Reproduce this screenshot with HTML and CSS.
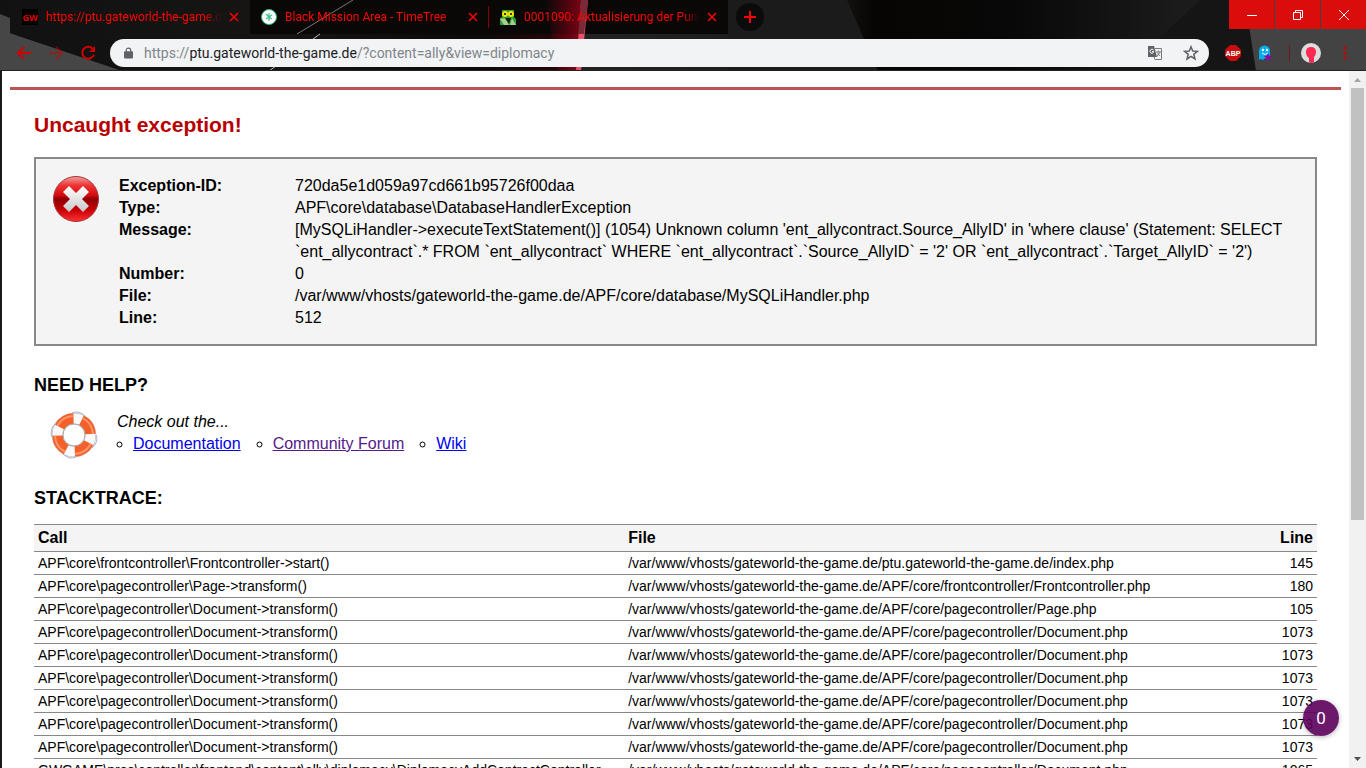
FILE: index.html
```
<!DOCTYPE html>
<html lang="en">
<head>
    <meta charset="UTF-8">
    <meta name="viewport" content="width=device-width, initial-scale=1.0">
    <title>Uncaught exception!</title>
    <link rel="stylesheet" href="styles.css">
</head>
<body>

<header class="browser">
    <svg class="theme" viewBox="0 0 1366 71" preserveAspectRatio="none" aria-hidden="true">
        <defs>
            <linearGradient id="base">
                <stop offset="0" stop-color="#111"/>
                <stop offset=".2" stop-color="#161514"/>
                <stop offset=".35" stop-color="#0b0a09"/>
                <stop offset=".415" stop-color="#2b0508"/>
                <stop offset=".425" stop-color="#222"/>
                <stop offset=".6" stop-color="#1c1c1c"/>
                <stop offset=".64" stop-color="#070503"/>
                <stop offset=".74" stop-color="#080808"/>
                <stop offset=".9" stop-color="#202020"/>
            </linearGradient>
            <linearGradient id="glow">
                <stop offset="0" stop-color="#a00018" stop-opacity="0"/>
                <stop offset="1" stop-color="#a00018" stop-opacity=".8"/>
            </linearGradient>
        </defs>
        <rect width="1366" height="71" fill="url(#base)"/>
        <path d="M0 14L10 18V33L122 71H0Z" fill="#464646"/>
        <path d="M10 0H82L98 62L10 33Z" fill="#131212"/>
        <path d="M847 0H728V71H878Z" fill="#1b1b1b"/>
        <path d="M1200 0L1126 71H1366V0Z" fill="#151515"/>
        <path d="M1245 0L1256 71H1366V0Z" fill="#434343"/>
        <path d="M250 0H728V34H250Z" fill="#090807"/>
        <path d="M545 0H584L577 71H558Z" fill="url(#glow)"/>
        <path d="M581 0H588L581 71H576Z" fill="#ef5069"/>
        <path d="M581 0H588L584 34H578Z" fill="#5d2029" opacity=".8"/>
        <path d="M353 0L297 34" stroke="#777"/>
        <path d="M320 34L269 71" stroke="#bbb"/>
        <path d="M0 70.500H1366" stroke="#222"/>
    </svg>

    <div class="tab-strip">
        <div class="tab">
            <svg class="favicon" viewBox="0 0 16 16"><rect width="16" height="16"/><text x="8" y="12" text-anchor="middle" class="gw">GW</text></svg>
            <span class="tab-title">https://ptu.gateworld-the-game.de/</span>
            <button class="tab-close" aria-label="Close tab"><svg viewBox="0 0 8 8"><path d="M0 0L8 8M8 0L0 8"/></svg></button>
        </div>
        <div class="tab">
            <svg class="favicon" viewBox="0 0 16 16"><circle cx="8" cy="8" r="7.500" fill="#fff" stroke="#24b47e"/><path d="M8 8L5 5M8 8V4M8 8L11 6M8 8L11 10M8 8V12M8 8L5 10" stroke="#3cbf8f" stroke-width="1.200"/></svg>
            <span class="tab-title">Black Mission Area - TimeTree</span>
            <button class="tab-close" aria-label="Close tab"><svg viewBox="0 0 8 8"><path d="M0 0L8 8M8 0L0 8"/></svg></button>
        </div>
        <div class="tab tab-divided">
            <svg class="favicon" viewBox="0 0 16 16"><path d="M2 1H14V8L16 10V16H0V9L2 8Z" fill="#2f9a32"/><path d="M0 10L5 9L9 16H4ZM12 9L16 16H10Z" fill="#a3d08a"/><path d="M5 9H11L9 15L7 12Z" fill="#10200c"/><circle cx="5" cy="5" r="3" fill="#f4e500"/><circle cx="11" cy="5" r="3" fill="#f4e500"/><circle cx="5" cy="5" r="1"/><circle cx="11" cy="5" r="1"/></svg>
            <span class="tab-title">0001090: Aktualisierung der Punkte</span>
            <button class="tab-close" aria-label="Close tab"><svg viewBox="0 0 8 8"><path d="M0 0L8 8M8 0L0 8"/></svg></button>
        </div>
        <button class="new-tab" aria-label="New tab"><svg viewBox="0 0 12 12"><path d="M6 0V12M0 6H12"/></svg></button>
        <div class="window-buttons">
            <button aria-label="Minimize"><svg viewBox="0 0 12 12"><path d="M1 6.500H11"/></svg></button>
            <button aria-label="Restore"><svg viewBox="0 0 12 12"><path d="M1.500 3.500H8.500V10.500H1.500ZM3.500 3.500V1.500H10.500V8.500H8.500"/></svg></button>
            <button aria-label="Close"><svg viewBox="0 0 12 12"><path d="M1 1L11 11M11 1L1 11"/></svg></button>
        </div>
    </div>

    <div class="toolbar">
        <button class="nav-btn" aria-label="Back"><svg viewBox="0 0 16 16"><path d="M15 8H2M8 2L2 8L8 14"/></svg></button>
        <button class="nav-btn forward" aria-label="Forward"><svg viewBox="0 0 16 16"><path d="M1 8H14M8 2L14 8L8 14"/></svg></button>
        <button class="nav-btn" aria-label="Reload"><svg viewBox="0 0 16 16"><path d="M13 4A6 6 0 1 0 14 9.500"/><path d="M15 1V7H9Z" class="fill"/></svg></button>
        <div class="address">
            <svg class="lock" viewBox="0 0 10 12"><path d="M1 4H9Q10 4 10 5V11Q10 12 9 12H1Q0 12 0 11V5Q0 4 1 4Z" fill="#5f6368"/><path d="M2.500 5V3A2.500 2.500 0 0 1 7.500 3V5" fill="none" stroke="#5f6368" stroke-width="1.300"/></svg>
            <div class="url">https://<b>ptu.gateworld-the-game.de</b>/?content=ally&amp;view=diplomacy</div>
            <button class="address-btn" aria-label="Translate"><svg viewBox="0 0 16 16"><path d="M1 1H7L10 12H1Z" fill="#5f6368"/><path d="M8 3.500H14.500V14.500H8L7 12" fill="none" stroke="#777b80"/><path d="M6.500 5A2 2 0 1 0 6.500 7.500V6.500H5" fill="none" stroke="#fff"/><path d="M9 7H14M11.500 5.500V7M13 7L9.500 12M10.500 8L13 11" fill="none" stroke="#777b80"/></svg></button>
            <button class="address-btn" aria-label="Bookmark"><svg viewBox="0 0 16 16"><path d="M8 1.800L9.700 6L14.400 6.300L10.800 9.300L12 14L8 11.400L4 14L5.200 9.300L1.600 6.300L6.300 6Z" fill="none" stroke="#5f6368" stroke-width="1.500"/></svg></button>
        </div>
        <div class="extensions">
            <button aria-label="Adblock Plus"><svg viewBox="0 0 16 16"><path d="M5 0H11L16 5V11L11 16H5L0 11V5Z" fill="#c70d0d"/><text x="8" y="11" text-anchor="middle" class="abp">ABP</text></svg></button>
            <button aria-label="Ghostery"><svg viewBox="0 0 16 16"><path d="M2 14V6A5 5 0 0 1 13 6V13L10 15L8 13L6 15L4 14L1 15Z" fill="#00aef0"/><circle cx="6" cy="5" r="1.200" fill="#fff"/><circle cx="10" cy="5" r="1.200" fill="#fff"/><path d="M5 8Q8 11 11 8" fill="none" stroke="#fff"/><path d="M11 8L12 10.500L15 11L13 12.800L14 16L11 14.200L8 16L9 13L7 11L10 10.500Z" fill="#8a0a9c"/></svg></button>
            <span class="separator"></span>
            <button class="profile" aria-label="Profile"><svg viewBox="0 0 20 20"><circle cx="10" cy="10" r="10" fill="#ddd"/><path d="M8 19L8 15Q5 13 5 9Q5 4 10 4Q15 4 15 9Q15 12 13 14V19Q10 21 8 19Z" fill="#ff2853"/></svg></button>
            <button aria-label="Menu"><svg viewBox="0 0 16 16"><g fill="#c00"><circle cx="8" cy="3" r="1.600"/><circle cx="8" cy="8" r="1.600"/><circle cx="8" cy="13" r="1.600"/></g></svg></button>
        </div>
    </div>
</header>

<div class="viewport">
    <main class="page">
        <h1>Uncaught exception!</h1>

        <section class="exception">
            <svg class="icon" viewBox="0 0 48 48" aria-hidden="true">
                <defs>
                    <linearGradient id="red" x2="0" y2="1">
                        <stop offset="0" stop-color="#f2a0a0"/>
                        <stop offset=".2" stop-color="#e33"/>
                        <stop offset=".42" stop-color="#d40a0e"/>
                        <stop offset=".5" stop-color="#8d0004"/>
                        <stop offset=".75" stop-color="#c90006"/>
                        <stop offset="1" stop-color="#f33"/>
                    </linearGradient>
                    <linearGradient id="cross" x2="0" y2="1">
                        <stop offset="0" stop-color="#fff"/>
                        <stop offset="1" stop-color="#c8c8c8"/>
                    </linearGradient>
                </defs>
                <circle cx="24" cy="24" r="22.500" fill="url(#red)" stroke="#a33338"/>
                <path d="M17 11L24 18L31 11L37 17L30 24L37 31L31 37L24 30L17 37L11 31L18 24L11 17Z" fill="url(#cross)"/>
            </svg>
            <dl>
                <dt>Exception-ID:</dt>
                <dd>720da5e1d059a97cd661b95726f00daa</dd>
                <dt>Type:</dt>
                <dd>APF\core\database\DatabaseHandlerException</dd>
                <dt>Message:</dt>
                <dd>[MySQLiHandler-&gt;executeTextStatement()] (1054) Unknown column 'ent_allycontract.Source_AllyID' in 'where clause' (Statement: SELECT `ent_allycontract`.* FROM `ent_allycontract` WHERE `ent_allycontract`.`Source_AllyID` = '2' OR `ent_allycontract`.`Target_AllyID` = '2')</dd>
                <dt>Number:</dt>
                <dd>0</dd>
                <dt>File:</dt>
                <dd>/var/www/vhosts/gateworld-the-game.de/APF/core/database/MySQLiHandler.php</dd>
                <dt>Line:</dt>
                <dd>512</dd>
            </dl>
        </section>

        <h2>NEED HELP?</h2>
        <section class="help">
            <svg class="icon" viewBox="0 0 48 48" aria-hidden="true">
                <g fill="none">
                    <circle cx="24" cy="24" r="16.500" stroke="#bdbdc4" stroke-width="11.500"/>
                    <circle cx="24" cy="24" r="16.500" stroke="#fafafa" stroke-width="10"/>
                    <circle cx="24" cy="24" r="16.500" stroke="#f4602a" stroke-width="10.500" stroke-dasharray="17 8.920" transform="rotate(-63 24 24)"/>
                    <circle cx="24" cy="24" r="19" stroke="#ff9468" stroke-width="2" stroke-dasharray="19.600 10.250" transform="rotate(-63 24 24)"/>
                    <path d="M22 2Q29 -1 35 5M46 24Q49 31 42 37M26 46Q19 49 13 43M2 26Q-1 18 6 12" stroke="#a9b0c8"/>
                    <circle cx="24" cy="24" r="11" stroke="#ababab"/>
                </g>
            </svg>
            <div>
                <em>Check out the...</em>
                <ul>
                    <li><a href="#">Documentation</a></li>
                    <li><a href="#" class="visited">Community Forum</a></li>
                    <li><a href="#">Wiki</a></li>
                </ul>
            </div>
        </section>

        <h2>STACKTRACE:</h2>
        <table class="stacktrace">
            <thead>
                <tr><th class="call">Call</th><th>File</th><th class="line">Line</th></tr>
            </thead>
            <tbody>
                <tr><td>APF\core\frontcontroller\Frontcontroller-&gt;start()</td><td>/var/www/vhosts/gateworld-the-game.de/ptu.gateworld-the-game.de/index.php</td><td class="line">145</td></tr>
                <tr><td>APF\core\pagecontroller\Page-&gt;transform()</td><td>/var/www/vhosts/gateworld-the-game.de/APF/core/frontcontroller/Frontcontroller.php</td><td class="line">180</td></tr>
                <tr><td>APF\core\pagecontroller\Document-&gt;transform()</td><td>/var/www/vhosts/gateworld-the-game.de/APF/core/pagecontroller/Page.php</td><td class="line">105</td></tr>
                <tr><td>APF\core\pagecontroller\Document-&gt;transform()</td><td>/var/www/vhosts/gateworld-the-game.de/APF/core/pagecontroller/Document.php</td><td class="line">1073</td></tr>
                <tr><td>APF\core\pagecontroller\Document-&gt;transform()</td><td>/var/www/vhosts/gateworld-the-game.de/APF/core/pagecontroller/Document.php</td><td class="line">1073</td></tr>
                <tr><td>APF\core\pagecontroller\Document-&gt;transform()</td><td>/var/www/vhosts/gateworld-the-game.de/APF/core/pagecontroller/Document.php</td><td class="line">1073</td></tr>
                <tr><td>APF\core\pagecontroller\Document-&gt;transform()</td><td>/var/www/vhosts/gateworld-the-game.de/APF/core/pagecontroller/Document.php</td><td class="line">1073</td></tr>
                <tr><td>APF\core\pagecontroller\Document-&gt;transform()</td><td>/var/www/vhosts/gateworld-the-game.de/APF/core/pagecontroller/Document.php</td><td class="line">1073</td></tr>
                <tr><td>APF\core\pagecontroller\Document-&gt;transform()</td><td>/var/www/vhosts/gateworld-the-game.de/APF/core/pagecontroller/Document.php</td><td class="line">1073</td></tr>
                <tr><td>GWGAME\pres\controller\frontend\content\ally\diplomacy\DiplomacyAddContractController</td><td>/var/www/vhosts/gateworld-the-game.de/APF/core/pagecontroller/Document.php</td><td class="line">1065</td></tr>
            </tbody>
        </table>
    </main>

    <div class="scrollbar">
        <svg viewBox="0 0 17 17"><path d="M5 11H12L8.500 7Z" fill="#a3a3a3"/></svg>
        <div class="thumb"></div>
        <svg viewBox="0 0 17 17"><path d="M5 6H12L8.500 10Z" fill="#505050"/></svg>
    </div>
    <button class="counter">0</button>
</div>

</body>
</html>
```

FILE: styles.css
```
* {
    margin: 0;
    padding: 0;
    box-sizing: border-box;
}

body {
    display: flex;
    flex-direction: column;
    height: 100vh;
    overflow: hidden;
    font-family: "Liberation Sans", Arial, sans-serif;
    font-size: 16px;
    line-height: 22px;
    color: #000;
    background: #fff;
}

button {
    display: flex;
    align-items: center;
    justify-content: center;
    border: none;
    background: none;
    cursor: pointer;
}

/* browser window */
.browser {
    position: relative;
    flex: none;
    font-family: Roboto, "Open Sans", sans-serif;
}

.theme {
    position: absolute;
    width: 100%;
    height: 100%;
    z-index: -1;
}

.tab-strip {
    display: flex;
    height: 34px;
    padding-left: 10px;
}

.tab {
    display: flex;
    align-items: center;
    width: 239px;
    padding: 0 7px 0 12px;
    color: #f00;
    font-size: 12px;
}

.tab-divided {
    padding-left: 11px;
    border-left: 1px solid #8b0000;
    border-image: linear-gradient(transparent 20%, #8b0000 20%, #8b0000 80%, transparent 80%) 1;
}

.favicon {
    flex: none;
    width: 16px;
    height: 16px;
    margin-right: 8px;
}

.gw {
    font: bold 9px "Open Sans", sans-serif;
    fill: #d00;
}

.tab-title {
    flex: 1;
    overflow: hidden;
    white-space: nowrap;
    -webkit-mask-image: linear-gradient(to right, #000 90%, transparent);
    mask-image: linear-gradient(to right, #000 90%, transparent);
}

.tab-close {
    width: 16px;
    height: 16px;
    margin-left: 4px;
}

.tab-close svg {
    width: 8px;
    height: 8px;
    stroke: #f00;
    stroke-width: 1.5;
    overflow: visible;
}

.new-tab {
    width: 28px;
    height: 28px;
    margin: 3px 0 0 9px;
    border-radius: 50%;
    background: #0b0b0b;
}

.new-tab svg {
    width: 12px;
    height: 12px;
    stroke: #f00;
    stroke-width: 2;
}

.window-buttons {
    display: flex;
    gap: 1px;
    height: 29px;
    margin-left: auto;
}

.window-buttons button {
    width: 45px;
    background: #da0c0c;
}

.window-buttons svg {
    width: 12px;
    height: 12px;
    fill: none;
    stroke: #fff;
}

.toolbar {
    display: flex;
    align-items: center;
    height: 37px;
    padding: 0 13px 0 16px;
}

.nav-btn {
    width: 16px;
    height: 16px;
    margin-right: 16px;
}

.nav-btn svg {
    width: 16px;
    height: 16px;
    fill: none;
    stroke: #d00000;
    stroke-width: 2;
}

.nav-btn .fill {
    fill: #d00000;
    stroke: none;
}

.forward {
    opacity: .5;
}

.address {
    display: flex;
    flex: 1;
    align-items: center;
    height: 28px;
    margin-right: 16px;
    margin-left: -2px;
    padding: 0 10px 0 14px;
    border-radius: 14px;
    background: #f1f3f4;
}

.lock {
    width: 9px;
    height: 12px;
    margin-right: 11px;
}

.url {
    flex: 1;
    font-size: 14px;
    color: #80868b;
}

.url b {
    font-weight: normal;
    color: #202124;
}

.address-btn {
    width: 16px;
    height: 16px;
    margin-left: 20px;
}

.extensions {
    display: flex;
    align-items: center;
    gap: 16px;
}

.extensions svg {
    display: block;
    width: 16px;
    height: 16px;
}

.extensions .profile svg {
    width: 20px;
    height: 20px;
}

.abp {
    font: bold 7px "Liberation Sans", sans-serif;
    fill: #fff;
}

.separator {
    width: 1px;
    height: 16px;
    margin-right: -5px;
    background: #701818;
}

/* exception page */
.viewport {
    position: relative;
    display: flex;
    flex: 1;
    min-height: 0;
    border-left: 2px solid #1a1a1a;
}

.page {
    flex: 1;
    margin: 16px 8px 0;
    padding: 24px;
    border-top: 3px solid #bc5256;
    overflow: hidden;
}

h1 {
    margin-bottom: 21px;
    font-size: 21px;
    line-height: 22px;
    color: #b80000;
}

h2 {
    margin: 28px 0 15px;
    font-size: 18px;
    line-height: 22px;
}

.icon {
    flex: none;
    width: 48px;
    height: 48px;
}

.exception {
    display: flex;
    padding: 16px 16px 15px;
    border: 2px solid #888;
    background: #f4f4f4;
}

.exception dl {
    display: grid;
    flex: 1;
    grid-template-columns: 176px 1fr;
    padding-left: 19px;
}

.exception dt {
    font-weight: bold;
}

.help {
    display: flex;
    padding-left: 16px;
    margin-bottom: 28px;
}

.help > div {
    padding-left: 19px;
}

.help ul {
    display: flex;
    gap: 32px;
    padding-left: 16px;
    list-style: circle;
}

a {
    color: #00e;
}

a.visited {
    color: #551a8b;
}

.stacktrace {
    width: 100%;
    table-layout: fixed;
    border-collapse: collapse;
    font-size: 14px;
    line-height: 16px;
}

.stacktrace th,
.stacktrace td {
    padding: 3px 4px;
    border-bottom: 1px solid #888;
    text-align: left;
}

.stacktrace th {
    padding: 4px;
    border-top: 1px solid #888;
    background: #f4f4f4;
    font-size: 16px;
    line-height: 18px;
}

.stacktrace .call {
    width: 46%;
}

.stacktrace .line {
    width: 60px;
    text-align: right;
}

.scrollbar {
    display: flex;
    flex-direction: column;
    width: 17px;
    background: #f1f1f1;
}

.scrollbar svg {
    flex: none;
    width: 17px;
    height: 17px;
}

.thumb {
    height: 62%;
    margin: 0 2px auto;
    background: #c1c1c1;
}

.counter {
    position: absolute;
    right: 27px;
    bottom: 32px;
    width: 36px;
    height: 36px;
    border-radius: 50%;
    background: rgba(92, 0, 92, .9);
    box-shadow: 0 1px 5px rgba(0, 0, 0, .3);
    font-family: Roboto, sans-serif;
    font-size: 17px;
    color: #fff;
}
```
